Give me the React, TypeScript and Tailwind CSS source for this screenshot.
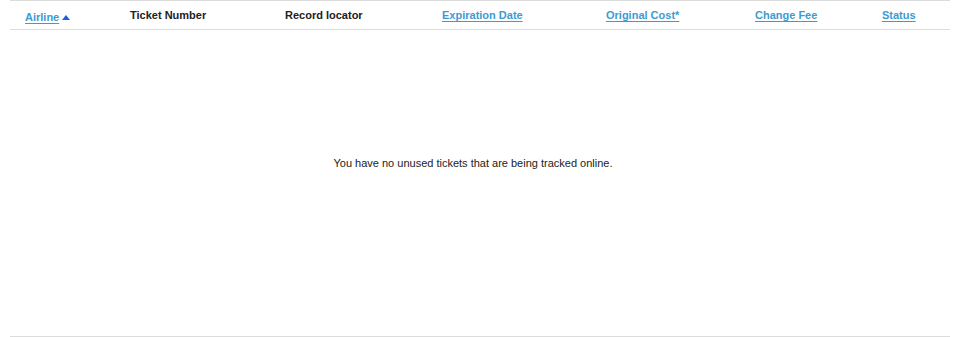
// Unused tickets table, empty state
const cols = [
  { label: 'Ticket Number', w: 'w-[155px]', link: false },
  { label: 'Record locator', w: 'w-[157px]', link: false },
  { label: 'Expiration Date', w: 'w-[164px]', link: true },
  { label: 'Original Cost*', w: 'w-[149px]', link: true },
  { label: 'Change Fee', w: 'w-[127px]', link: true },
  { label: 'Status', w: 'flex-1', link: true },
];

export default function App() {
  return (
    <div className="bg-white px-[10px] font-['Liberation_Sans',Arial,sans-serif]">
      <div className="flex h-[337px] flex-col border-y border-[#dcdcdc]">
        <div className="flex h-[29px] border-b border-[#dcdcdc] pl-[15px] pt-[8px] text-[11px] font-bold leading-[13px] text-[#222]">
          <div className="mt-[2px] flex w-[105px] items-start gap-[3px]">
            <a href="#" className="text-[#3d9bd1] underline decoration-[#3d9bd1] underline-offset-2">
              Airline
            </a>
            <svg width="8" height="5" viewBox="0 0 8 5" className="mt-[4px]">
              <polygon points="0,5 4,0 8,5" fill="#1a5fe0" />
            </svg>
          </div>
          {cols.map(c => (
            <div key={c.label} className={c.w}>
              {c.link ? (
                <a href="#" className="text-[#3d9bd1] underline decoration-[#3d9bd1] underline-offset-2">
                  {c.label}
                </a>
              ) : (
                c.label
              )}
            </div>
          ))}
        </div>
        <div className="flex-1 pr-[14px] pt-[127px] text-center text-[11px] leading-[13px] text-[#222]">
          You have no unused tickets that are being tracked online.
        </div>
      </div>
    </div>
  );
}
